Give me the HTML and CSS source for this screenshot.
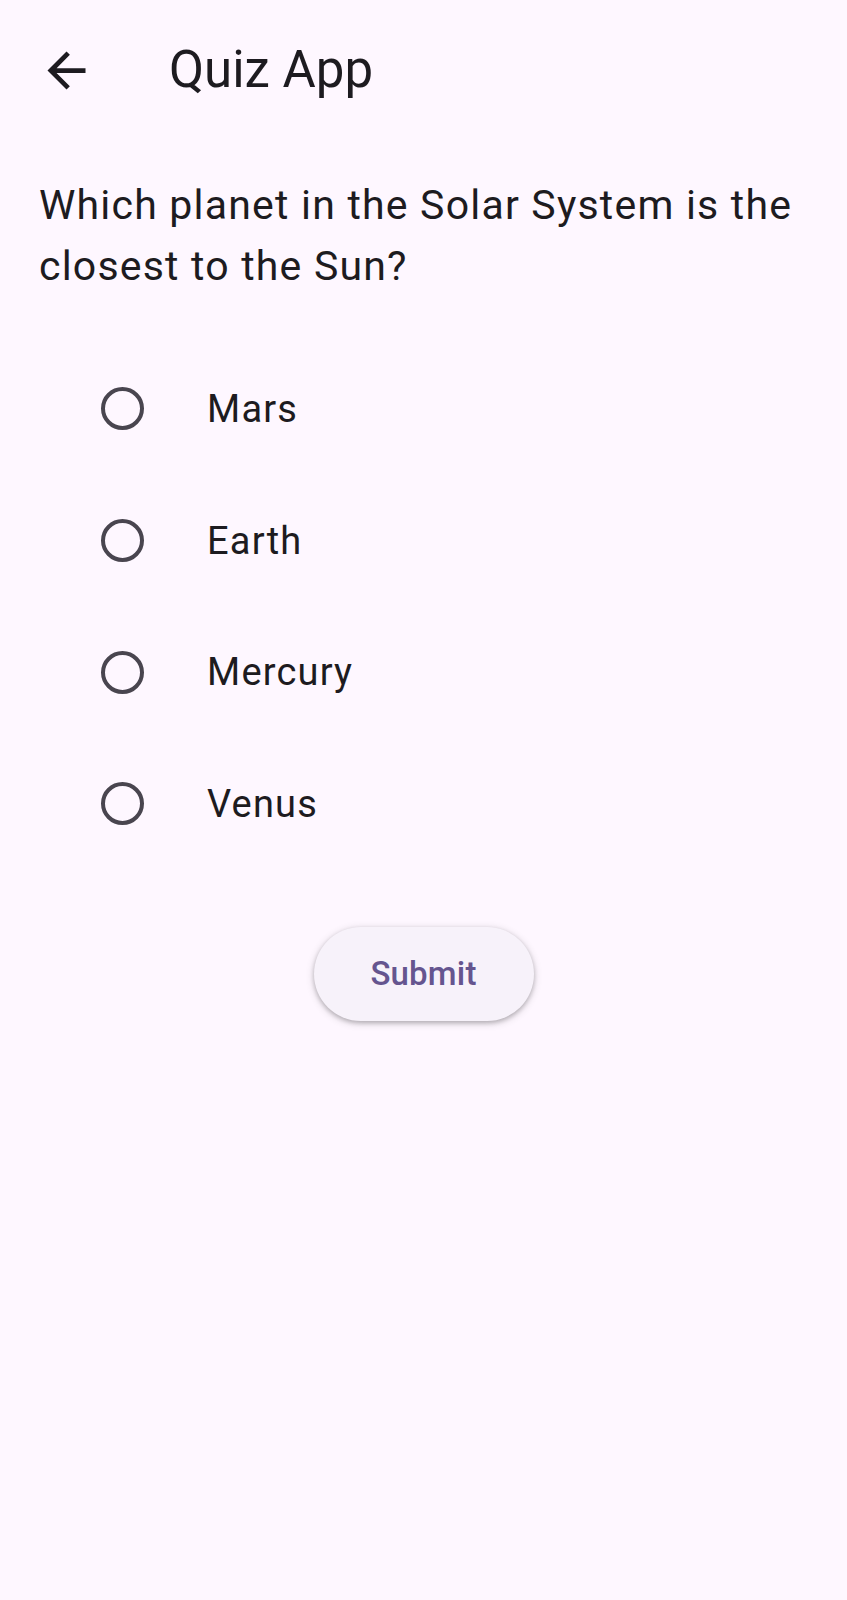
FILE: index.html
```html
<!DOCTYPE html>
<html lang="en">
<head>
<meta charset="utf-8">
<title>Quiz App</title>
<link rel="stylesheet" href="styles.css">
</head>
<body>
<div class="app">
  <header class="appbar">
    <button class="back" aria-label="Back">
      <svg class="back-icon" viewBox="0 0 24 24" width="57" height="57" aria-hidden="true">
        <path d="M20 11H7.83l5.59-5.59L12 4l-8 8 8 8 1.41-1.41L7.83 13H20v-2z" fill="#1D1B20"/>
      </svg>
    </button>
    <h1 class="title">Quiz App</h1>
  </header>
  <main class="content">
    <p class="question">Which planet in the Solar System is the closest to the Sun?</p>
    <ul class="options">
      <li class="option">
        <span class="radio"></span>
        <span class="label">Mars</span>
      </li>
      <li class="option">
        <span class="radio"></span>
        <span class="label">Earth</span>
      </li>
      <li class="option">
        <span class="radio"></span>
        <span class="label">Mercury</span>
      </li>
      <li class="option">
        <span class="radio"></span>
        <span class="label">Venus</span>
      </li>
    </ul>
    <div class="actions">
      <button class="submit">Submit</button>
    </div>
  </main>
</div>
</body>
</html>
```
FILE: styles.css
```css
* {
  box-sizing: border-box;
}

html, body {
  margin: 0;
  padding: 0;
  background: #FEF7FF;
}

body {
  font-family: Roboto, "Liberation Sans", sans-serif;
  color: #1D1B20;
  min-height: 1600px;
}

.appbar {
  height: 140px;
  display: flex;
  align-items: center;
  padding-left: 38px;
}

.back {
  width: 57px;
  height: 57px;
  padding: 0;
  margin: 0;
  border: none;
  background: none;
  display: flex;
  align-items: center;
  justify-content: center;
}

.back-icon {
  display: block;
  width: 57px;
  height: 57px;
}

.title {
  margin: 0 0 0 74px;
  font-size: 51px;
  line-height: 60px;
  font-weight: 400;
  color: #1D1B20;
}

.content {
  padding: 0 38px 0 39px;
}

.question {
  margin: 35px 0 0 0;
  font-size: 41px;
  line-height: 61px;
  font-weight: 400;
  letter-spacing: 1.2px;
}

.options {
  list-style: none;
  margin: 46px 0 0 0;
  padding: 0 0 0 62px;
}

.option {
  height: 131.7px;
  display: flex;
  align-items: center;
}

.radio {
  width: 43px;
  height: 43px;
  border-radius: 50%;
  border: 4.8px solid #49454F;
  flex: none;
}

.label {
  margin-left: 63px;
  font-size: 38px;
  line-height: 56px;
  letter-spacing: 1.2px;
  color: #1D1B20;
}

.actions {
  display: flex;
  justify-content: center;
  margin-top: 57px;
  margin-left: -39px;
  margin-right: -38px;
}

.submit {
  width: 220px;
  height: 94px;
  border: none;
  border-radius: 47px;
  background: #F7F2FA;
  color: #65558F;
  font-family: Roboto, "Liberation Sans", sans-serif;
  font-size: 33px;
  font-weight: 500;
  letter-spacing: 0.2px;
  box-shadow: 0 2px 4px rgba(0, 0, 0, 0.22), 0 2px 7px 2px rgba(0, 0, 0, 0.1);
  padding: 0;
}
```
